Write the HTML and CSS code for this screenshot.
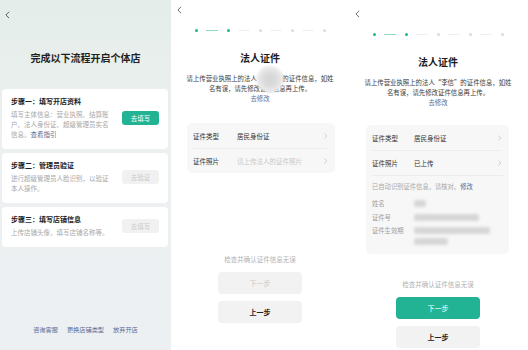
FILE: index.html
```html
<!DOCTYPE html>
<html lang="zh-CN">
<head>
<meta charset="utf-8">
<title>开店流程</title>
<link rel="stylesheet" href="styles.css">
</head>
<body>
<div class="screens">

  <section class="screen screen--steps">
    <div class="back back--tall">
      <svg class="back-icon" viewBox="0 0 6 10" width="5" height="8"><polyline points="5,1 1,5 5,9" fill="none" stroke="currentColor" stroke-width="1.2"/></svg>
    </div>
    <h1 class="steps-title">完成以下流程开启个体店</h1>
    <div class="step-list">
      <div class="step-card">
        <div class="step-text">
          <div class="step-name">步骤一：填写开店资料</div>
          <p class="step-desc">填写主体信息：营业执照、结算账户、法人身份证、超级管理员实名信息。<span class="link">查看指引</span></p>
        </div>
        <span class="btn-small btn-small--primary">去填写</span>
      </div>
      <div class="step-card">
        <div class="step-text">
          <div class="step-name">步骤二：管理员验证</div>
          <p class="step-desc">进行超级管理员人脸识别，以验证本人操作。</p>
        </div>
        <span class="btn-small">去验证</span>
      </div>
      <div class="step-card">
        <div class="step-text">
          <div class="step-name">步骤三：填写店铺信息</div>
          <p class="step-desc">上传店铺头像，填写店铺名称等。</p>
        </div>
        <span class="btn-small">去填写</span>
      </div>
    </div>
    <nav class="footer-links">
      <span>咨询客服</span><span>更换店铺类型</span><span>放弃开店</span>
    </nav>
  </section>

  <section class="screen screen--form">
    <div class="back">
      <svg class="back-icon" viewBox="0 0 6 10" width="5" height="8"><polyline points="5,1 1,5 5,9" fill="none" stroke="currentColor" stroke-width="1.2"/></svg>
    </div>
    <div class="stepper">
      <span class="dot dot--done"></span><span class="bar bar--done"></span>
      <span class="dot dot--done"></span><span class="bar"></span>
      <span class="dot"></span><span class="bar"></span>
      <span class="dot"></span><span class="bar"></span>
      <span class="dot"></span>
    </div>
    <h2 class="form-title">法人证件</h2>
    <p class="form-desc">请上传营业执照上的法人“李信”的证件信息，如姓<br>名有误，请先修改证件信息再上传。<br><span class="link">去修改</span><span class="name-mask"></span></p>
    <div class="id-card">
      <div class="row">
        <span class="row-label">证件类型</span>
        <span class="row-value">居民身份证</span>
        <svg class="row-chev" viewBox="0 0 4 7" width="3.5" height="6"><polyline points="0.6,0.6 3.2,3.5 0.6,6.4" fill="none" stroke="currentColor" stroke-width="0.8"/></svg>
      </div>
      <div class="row">
        <span class="row-label">证件照片</span>
        <span class="row-value row-value--placeholder">请上传法人的证件照片</span>
        <svg class="row-chev" viewBox="0 0 4 7" width="3.5" height="6"><polyline points="0.6,0.6 3.2,3.5 0.6,6.4" fill="none" stroke="currentColor" stroke-width="0.8"/></svg>
      </div>
    </div>
    <p class="confirm-note confirm-note--far">检查并确认证件信息无误</p>
    <div class="btn btn--disabled">下一步</div>
    <div class="btn btn--secondary">上一步</div>
  </section>

  <section class="screen screen--form screen--filled">
    <div class="back">
      <svg class="back-icon" viewBox="0 0 6 10" width="5" height="8"><polyline points="5,1 1,5 5,9" fill="none" stroke="currentColor" stroke-width="1.2"/></svg>
    </div>
    <div class="stepper">
      <span class="dot dot--done"></span><span class="bar bar--done"></span>
      <span class="dot dot--done"></span><span class="bar"></span>
      <span class="dot"></span><span class="bar"></span>
      <span class="dot"></span><span class="bar"></span>
      <span class="dot"></span>
    </div>
    <h2 class="form-title">法人证件</h2>
    <p class="form-desc">请上传营业执照上的法人“李信”的证件信息，如姓<br>名有误，请先修改证件信息再上传。<br><span class="link">去修改</span></p>
    <div class="id-card">
      <div class="row">
        <span class="row-label">证件类型</span>
        <span class="row-value">居民身份证</span>
        <svg class="row-chev" viewBox="0 0 4 7" width="3.5" height="6"><polyline points="0.6,0.6 3.2,3.5 0.6,6.4" fill="none" stroke="currentColor" stroke-width="0.8"/></svg>
      </div>
      <div class="row">
        <span class="row-label">证件照片</span>
        <span class="row-value">已上传</span>
        <svg class="row-chev" viewBox="0 0 4 7" width="3.5" height="6"><polyline points="0.6,0.6 3.2,3.5 0.6,6.4" fill="none" stroke="currentColor" stroke-width="0.8"/></svg>
      </div>
      <div class="id-info">
        <p class="auto-note">已自动识别证件信息，请核对。<span class="link">修改</span></p>
        <div class="info-row">
          <span class="info-label">姓名</span>
          <span class="blur blur--name"></span>
        </div>
        <div class="info-row">
          <span class="info-label">证件号</span>
          <span class="blur blur--id"></span>
        </div>
        <div class="info-row info-row--tall">
          <span class="info-label">证件生效期</span>
          <span class="blur-stack">
            <span class="blur blur--date"></span>
            <span class="blur blur--date2"></span>
          </span>
        </div>
      </div>
    </div>
    <p class="confirm-note confirm-note--near">检查并确认证件信息无误</p>
    <div class="btn btn--primary">下一步</div>
    <div class="btn btn--secondary">上一步</div>
  </section>

</div>
</body>
</html>
```

FILE: styles.css
```css
* {
  box-sizing: border-box;
  margin: 0;
  padding: 0;
}

body {
  margin: 0;
  width: 528px;
  height: 350px;
  overflow: hidden;
  background: #ffffff;
  color: #333333;
  font-family: "Noto Sans CJK SC", "Noto Sans", "Liberation Sans", sans-serif;
}

.screens {
  display: flex;
  height: 350px;
}

.screen {
  flex: none;
  display: flex;
  flex-direction: column;
  height: 350px;
}

/* ---------- screen 1 ---------- */
.screen--steps {
  width: 171px;
  background: linear-gradient(180deg, #e4edea 0%, #e9efed 22%, #edf0f1 45%, #edf0f2 100%);
}

.back {
  height: 20px;
  display: flex;
  align-items: center;
  padding-left: 6px;
  color: #666666;
}

.back--tall {
  height: 30px;
  padding-left: 5px;
  color: #555555;
}

.steps-title {
  margin-top: 21px;
  font-size: 10px;
  line-height: 14px;
  font-weight: 700;
  text-align: center;
  color: #1f1f1f;
}

.step-list {
  margin: 24px 3px 0 2px;
  display: flex;
  flex-direction: column;
  gap: 4px;
}

.step-card {
  display: flex;
  align-items: center;
  background: #ffffff;
  border-radius: 4px;
  padding: 7px 9px 10px 9px;
}

.step-text {
  flex: none;
  width: 101px;
}

.step-name {
  font-size: 7px;
  line-height: 10px;
  font-weight: 700;
  color: #222222;
}

.step-desc {
  margin-top: 3px;
  font-size: 6.5px;
  line-height: 10px;
  color: #a8a8a8;
}

.link {
  color: #576b95;
}

.btn-small {
  flex: none;
  margin-left: auto;
  width: 37px;
  height: 14px;
  border-radius: 3px;
  display: flex;
  align-items: center;
  justify-content: center;
  font-size: 6.5px;
  background: #f1f1f1;
  color: #cacaca;
}

.btn-small--primary {
  background: #21b394;
  color: #ffffff;
}

.footer-links {
  margin-top: auto;
  padding-bottom: 15px;
  display: flex;
  justify-content: center;
  gap: 9px;
  font-size: 6.2px;
  line-height: 10px;
  color: #576b95;
}

/* ---------- screens 2 & 3 ---------- */
.screen--form {
  width: 178px;
  background: #ffffff;
}

.screen--filled {
  padding-top: 4px;
}

.back-icon {
  display: block;
}

.stepper {
  height: 20px;
  display: flex;
  align-items: center;
  justify-content: center;
}

.dot {
  width: 3px;
  height: 3px;
  border-radius: 50%;
  background: #dddddd;
}

.dot--done {
  background: #21b394;
}

.bar {
  width: 12px;
  height: 1px;
  margin: 0 8.5px;
  background: #f0f0f0;
}

.bar--done {
  background: #8fd8c6;
}

.form-title {
  margin-top: 11px;
  font-size: 10px;
  line-height: 14px;
  font-weight: 700;
  text-align: center;
  color: #1a1a1a;
}

.form-desc {
  position: relative;
  margin-top: 9px;
  font-size: 6.4px;
  line-height: 10px;
  text-align: center;
  color: #3a3a3a;
}

.name-mask {
  position: absolute;
  left: 83px;
  top: -9px;
  width: 32px;
  height: 29px;
  border-radius: 50%;
  background: radial-gradient(circle, #d4d4d4 0%, #dcdcdc 30%, #e8e8e8 52%, rgba(255, 255, 255, 0) 72%);
}

.id-card {
  margin: 19px 14px 0 16px;
  background: #f7f7f7;
  border-radius: 5px;
}

.screen--filled .id-card {
  margin: 17px 18px 0 17px;
}

.row {
  display: flex;
  align-items: center;
  height: 25px;
  margin: 0 8px 0 6px;
  font-size: 6.5px;
  color: #333333;
}

.row + .row {
  border-top: 1px solid #ececec;
}

.row-label {
  flex: none;
  width: 44px;
}

.screen--filled .row-label {
  width: 42px;
}

.row-value {
  flex: 1;
}

.row-value--placeholder {
  color: #c9c9c9;
}

.row-chev {
  flex: none;
  color: #bbbbbb;
}

.id-info {
  margin: 0 6px;
  border-top: 1px solid #ececec;
  padding: 6px 0 7px;
}

.auto-note {
  font-size: 6.3px;
  line-height: 10px;
  color: #a8a8a8;
  margin-bottom: 5px;
}

.info-row {
  display: flex;
  align-items: center;
  height: 13.5px;
  font-size: 6.3px;
  color: #9d9d9d;
}

.info-row--tall {
  height: 23px;
  align-items: flex-start;
}

.info-row--tall .info-label {
  line-height: 13.5px;
}

.info-label {
  flex: none;
  width: 42px;
}

.blur-stack {
  display: flex;
  flex-direction: column;
  gap: 4px;
  padding-top: 3px;
}

.blur {
  display: block;
  height: 7px;
  border-radius: 3px;
  background: #d6d6d6;
  filter: blur(1.4px);
}

.blur--name {
  width: 12px;
}

.blur--id {
  width: 65px;
}

.blur--date {
  width: 76px;
}

.blur--date2 {
  width: 34px;
}

.confirm-note {
  font-size: 6.5px;
  line-height: 10px;
  text-align: center;
  color: #b3b3b3;
}

.confirm-note--far {
  margin-top: 81px;
}

.confirm-note--near {
  margin-top: 25px;
}

.btn {
  width: 84px;
  height: 22px;
  margin: 8px auto 0;
  border-radius: 4px;
  display: flex;
  align-items: center;
  justify-content: center;
  font-size: 7px;
}

.btn--disabled {
  background: #f2f2f2;
  color: #c9c9c9;
}

.btn--primary {
  background: #21b394;
  color: #ffffff;
}

.btn--secondary {
  margin-top: 7px;
  background: #f2f2f2;
  color: #222222;
  font-weight: 700;
}
```
